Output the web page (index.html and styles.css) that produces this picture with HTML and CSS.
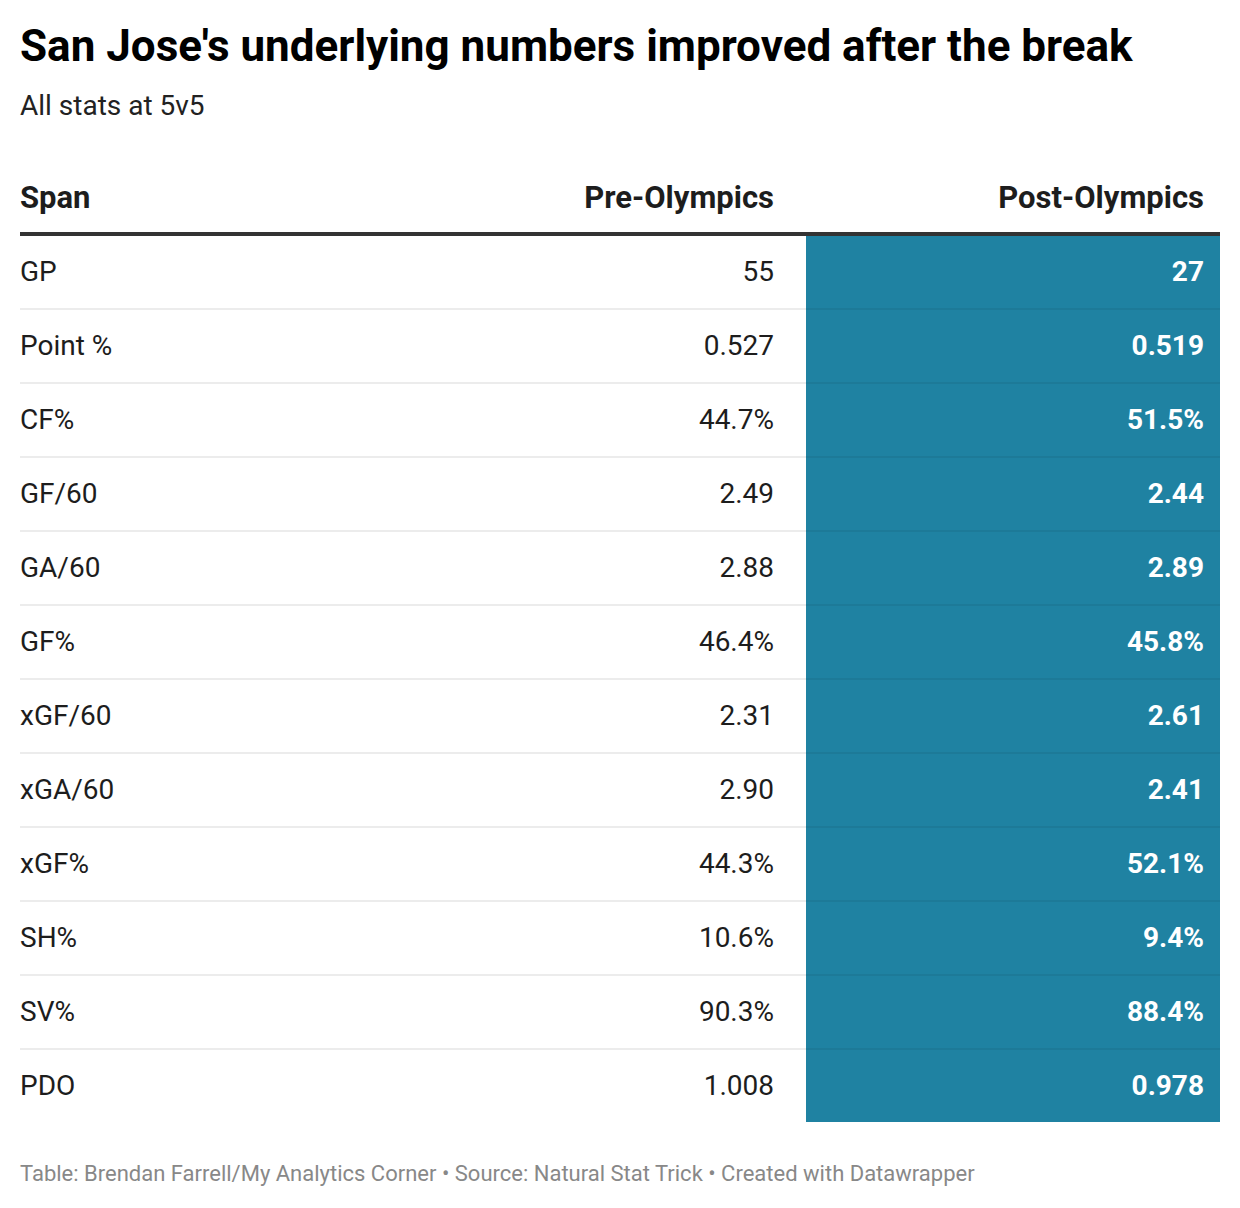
FILE: index.html
```html
<!DOCTYPE html>
<html>
<head>
<meta charset="utf-8">
<link rel="stylesheet" href="styles.css">
</head>
<body>
<div class="chart">
  <h1 class="title">San Jose's underlying numbers improved after the break</h1>
  <p class="subtitle">All stats at 5v5</p>
  <table class="tbl">
    <thead>
      <tr>
        <th class="c1">Span</th>
        <th class="c2">Pre-Olympics</th>
        <th class="c3">Post-Olympics</th>
      </tr>
    </thead>
    <tbody>
      <tr><td class="c1">GP</td><td class="c2">55</td><td class="c3 hl">27</td></tr>
      <tr><td class="c1">Point %</td><td class="c2">0.527</td><td class="c3 hl">0.519</td></tr>
      <tr><td class="c1">CF%</td><td class="c2">44.7%</td><td class="c3 hl">51.5%</td></tr>
      <tr><td class="c1">GF/60</td><td class="c2">2.49</td><td class="c3 hl">2.44</td></tr>
      <tr><td class="c1">GA/60</td><td class="c2">2.88</td><td class="c3 hl">2.89</td></tr>
      <tr><td class="c1">GF%</td><td class="c2">46.4%</td><td class="c3 hl">45.8%</td></tr>
      <tr><td class="c1">xGF/60</td><td class="c2">2.31</td><td class="c3 hl">2.61</td></tr>
      <tr><td class="c1">xGA/60</td><td class="c2">2.90</td><td class="c3 hl">2.41</td></tr>
      <tr><td class="c1">xGF%</td><td class="c2">44.3%</td><td class="c3 hl">52.1%</td></tr>
      <tr><td class="c1">SH%</td><td class="c2">10.6%</td><td class="c3 hl">9.4%</td></tr>
      <tr><td class="c1">SV%</td><td class="c2">90.3%</td><td class="c3 hl">88.4%</td></tr>
      <tr class="last"><td class="c1">PDO</td><td class="c2">1.008</td><td class="c3 hl">0.978</td></tr>
    </tbody>
  </table>
  <p class="footer">Table: Brendan Farrell/My Analytics Corner • Source: Natural Stat Trick • Created with Datawrapper</p>
</div>
</body>
</html>
```

FILE: styles.css
```css
html, body {
  margin: 0;
  padding: 0;
  background: #ffffff;
}
body {
  font-family: Roboto, "Liberation Sans", sans-serif;
  color: #1d1d1d;
}
.chart {
  padding: 20px 20px 0 20px;
}
.title {
  margin: 0;
  font-size: 44px;
  font-weight: 700;
  line-height: 52px;
  color: #000;
}
.subtitle {
  margin: 16px 0 0 0;
  font-size: 28px;
  line-height: 36px;
  color: #222;
}
.tbl {
  width: 1200px;
  border-collapse: collapse;
  margin-top: 56px;
  font-size: 28px;
}
.tbl th {
  font-weight: 700;
  font-size: 31px;
  line-height: 36px;
  padding: 0 0 16px 0;
  border-bottom: 4px solid #333;
  color: #1d1d1d;
}
.tbl td {
  height: 72px;
  padding: 0;
  border-bottom: 2px solid #ececec;
  line-height: 34px;
}
.tbl tr.last td {
  border-bottom: none;
}
.c1 {
  text-align: left;
}
.c2 {
  text-align: right;
  padding-right: 32px !important;
}
.c3 {
  text-align: right;
  width: 414px;
  padding-right: 16px !important;
  box-sizing: border-box;
}
.hl {
  background: #1f82a2;
  color: #fff;
  font-weight: 700;
  border-bottom-color: #1d7a98 !important;
}
.footer {
  margin: 38px 0 0 0;
  font-size: 22px;
  line-height: 28px;
  color: #888;
}
```
